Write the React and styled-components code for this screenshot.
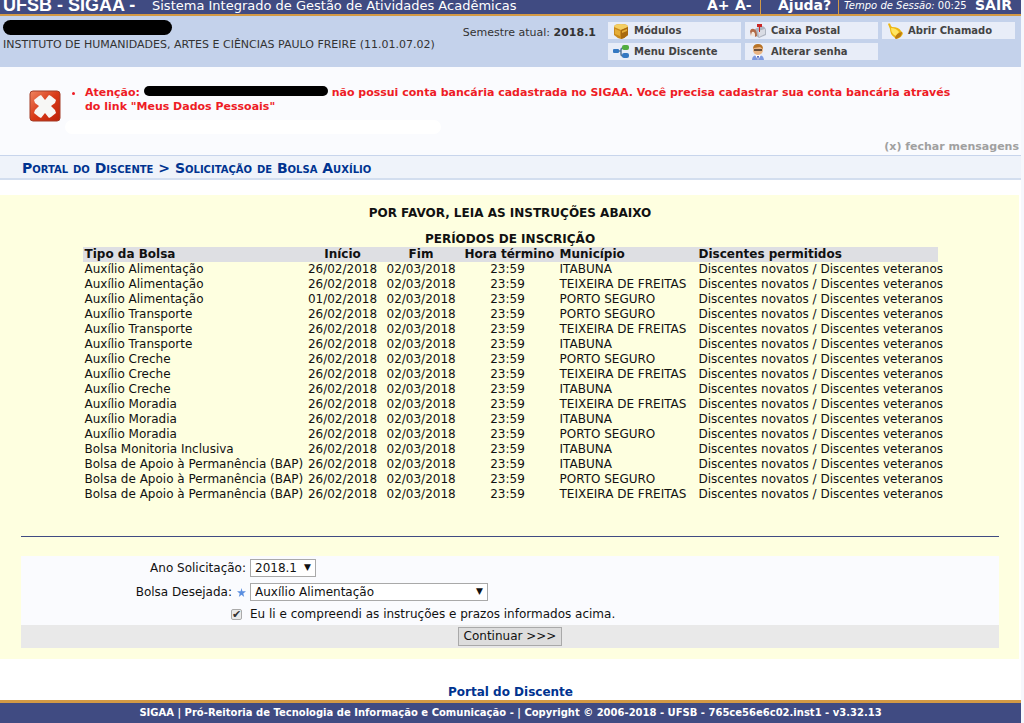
import React, { useState } from 'react';
import styled, { createGlobalStyle } from 'styled-components';

const GlobalStyle = createGlobalStyle`
  * {
    box-sizing: border-box;
  }

  body {
    margin: 0;
    background: #fff;
    color: #111;
    font-family: Verdana, 'DejaVu Sans', sans-serif;
    font-size: 12px;
    line-height: 15px;
  }
`;

const Page = styled.div`
  border-right: 3px solid #f6f7fc;
`;

const TopBar = styled.header`
  display: flex;
  align-items: flex-end;
  height: 16px;
  padding: 0 8px 0 3px;
  overflow: hidden;
  background: #404b82;
  border-bottom: 2px solid #d39a45;
  color: #fff;
  white-space: nowrap;
`;

const Brand = styled.span`
  width: 149px;
  font: bold 18px/18px 'Liberation Sans', Arial, sans-serif;
`;

const SystemName = styled.span`
  flex: 1;
  font-size: 13px;
  line-height: 16px;
`;

const TopTools = styled.div`
  display: flex;
  align-items: flex-end;
`;

const TopLink = styled.a`
  width: ${props => props.$width};
  color: #fff;
  font-size: 14px;
  font-weight: bold;
  line-height: 18px;
  text-decoration: none;
`;

const Session = styled.span`
  width: 137px;
  padding-left: 5px;
  border-left: 1px solid #d39a45;
  font-size: 10px;
  line-height: 16px;
`;

const Divider = styled.span`
  width: 18px;
  height: 14px;
  border-left: 1px solid #d39a45;
`;

const UserPanel = styled.section`
  display: flex;
  align-items: flex-start;
  height: 51px;
  padding: 4px 6px 0 3px;
  background: #c4d2eb;
  font-size: 11px;
  color: #333;
`;

const UserInfo = styled.div`
  flex: 1;
  white-space: nowrap;
`;

const Semester = styled.div`
  padding-top: 5px;
  margin-right: 12px;
  white-space: nowrap;
`;

const UserName = styled.span`
  display: block;
  width: 169px;
  height: 15px;
  border-radius: 8px;
  background: #000;
`;

const Unit = styled.div`
  padding-top: 2px;
`;

const Shortcuts = styled.nav`
  display: grid;
  grid-template-columns: repeat(3, 133px);
  grid-auto-rows: 17px;
  gap: 4px;
  margin-top: 2px;
`;

const Shortcut = styled.a`
  display: flex;
  align-items: center;
  gap: 5px;
  padding-left: 5px;
  background: #e8edf8;
  color: #444;
  font-size: 10px;
  font-weight: bold;
  text-decoration: none;
  white-space: nowrap;

  svg {
    width: 16px;
    height: 16px;
    flex: none;
  }
`;

const Messages = styled.section`
  display: flex;
  flex-direction: column;
  height: 88px;
  padding: 19px 2px 0 29px;
  background: #fafbfe;
`;

const MessageRow = styled.div`
  display: flex;
  flex: 1;

  > svg {
    flex: none;
    width: 32px;
    height: 32px;
    margin-top: 4px;
  }
`;

const MessageBody = styled.div`
  flex: 1;
`;

const ErrorList = styled.ul`
  margin: 0 0 6px;
  padding: 0 32px 0 24px;
  color: #ee1c25;
  font-size: 11px;
  font-weight: bold;
  line-height: 14px;
`;

const Redacted = styled.span`
  display: inline-block;
  width: 184px;
  height: 10px;
  border-radius: 5px;
  background: #000;
`;

const Smudge = styled.div`
  width: 376px;
  height: 14px;
  margin-left: 4px;
  border-radius: 7px;
  background: #fff;
`;

const CloseButton = styled.button`
  align-self: flex-end;
  padding: 0;
  margin-bottom: 1px;
  border: none;
  background: none;
  color: #a0a0a0;
  font-family: inherit;
  font-size: 11px;
  font-weight: bold;
  line-height: 15px;
`;

const Breadcrumb = styled.h2`
  margin: 0 0 15px;
  padding: 3px 22px 0;
  border-top: 1px solid #c8d5ec;
  border-bottom: 2px solid #d3deef;
  background: #eff3fa;
  color: #003390;
  font-size: 14px;
  font-variant: small-caps;
  line-height: 19px;

  a {
    color: inherit;
    text-decoration: none;
  }
`;

const Content = styled.main`
  padding: 11px 20px 11px 21px;
  margin-right: 2px;
  background: #feffe0;
`;

const Heading = styled.h3`
  margin: 0;
  font-size: 12px;
  line-height: 15px;
  text-align: center;
`;

const Periods = styled.table`
  width: 855px;
  max-width: 100%;
  margin: 11px auto 0;
  border-collapse: collapse;
  table-layout: fixed;
  line-height: 15px;
  white-space: nowrap;

  caption {
    font-weight: bold;
  }

  thead {
    background: #dedfe3;
  }
`;

const Cell = styled.td`
  width: ${props => props.$width};
  padding: 0 7px 0 2px;
  text-align: ${props => props.$align || 'left'};
`;

const Rule = styled.hr`
  height: 1px;
  margin: 34px 0 19px;
  border: none;
  background: #404b82;
`;

const Form = styled.form`
  background: #fafbfe;
`;

const Field = styled.div`
  display: grid;
  grid-template-columns: 225px 1fr;
  column-gap: 4px;
  align-items: center;
  height: ${props => props.$height || '24px'};

  > :first-child {
    justify-self: end;
  }
`;

const LabelCell = styled.div`
  display: flex;
  align-items: center;
  gap: 5px;

  svg {
    width: 9px;
    height: 9px;
  }
`;

const SelectBox = styled.span`
  position: relative;
  width: ${props => props.$width};

  &::after {
    content: '▼';
    position: absolute;
    top: 0;
    right: 5px;
    font-size: 9px;
    line-height: 17px;
    pointer-events: none;
  }
`;

const Select = styled.select`
  appearance: none;
  display: block;
  width: 100%;
  height: 18px;
  padding: 0 4px;
  border: 1px solid #a9a9a9;
  border-radius: 0;
  background: #fff;
  color: #111;
  font-family: inherit;
  font-size: 12px;
  line-height: 16px;
`;

const Checkbox = styled.input`
  appearance: none;
  display: grid;
  place-items: center;
  width: 11px;
  height: 11px;
  margin: 0 4px 0 0;
  border: 1px solid #aaa;
  border-radius: 2px;
  background: #eaeaea;

  &:checked::after {
    content: '✔';
    font-size: 11px;
    line-height: 9px;
    color: #333;
  }
`;

const Actions = styled.div`
  display: flex;
  justify-content: center;
  padding: 2px 0;
  background: #e9e9e9;
`;

const SubmitButton = styled.button`
  width: 104px;
  height: 19px;
  padding: 0;
  border: 1px solid #a9a9a9;
  background: #dddddd;
  color: #111;
  font-family: inherit;
  font-size: 12px;
  line-height: 15px;
`;

const BackLink = styled.div`
  padding: 26px 0 0;
  text-align: center;

  a {
    color: #003390;
    font-weight: bold;
    text-decoration: none;
  }
`;

const Footer = styled.footer`
  border-top: 3px solid #d39a45;
  background: #404b82;
  color: #fff;
  font-size: 10px;
  font-weight: bold;
  line-height: 20px;
  text-align: center;
`;

const ModulesIcon = () => (
  <svg viewBox="0 0 16 16">
    <path d="M1 4q0-3 7-3t7 3v8q-3 3-7 4-4-1-7-4z" fill="#c98a1c" />
    <path d="M1 4q0-3 7-3t7 3L8 7z" fill="#f4cf63" />
    <path d="M8 7l7-3v8q-3 3-7 4z" fill="#a8690e" />
    <path d="M2 6l5 2v5l-5-2zM9 8l5-2v2l-5 2z" fill="#e5ad37" />
  </svg>
);

const MenuIcon = () => (
  <svg viewBox="0 0 16 16">
    <path d="M5 7h3M12 4h-2Q8 4 8 6v4q0 2 2 2h2" fill="none" stroke="#56779b" strokeWidth="1.5" />
    <rect x="0" y="5" width="6" height="4" rx="1" fill="#3478c2" />
    <rect x="9" y="1" width="7" height="5" rx="2" fill="#52ad3f" />
    <rect x="9" y="9" width="7" height="5" rx="2" fill="#3478c2" />
  </svg>
);

const MailboxIcon = () => (
  <svg viewBox="0 0 16 16">
    <path d="M5 6l6-3q4 0 5 4v5l-7 3-4-3z" fill="#aeb4c0" />
    <path d="M0 8q1-3 4-2 3 1 3 7l-2 1q0-5-3-5l-1 4z" fill="#b26b48" />
    <path d="M2 9q3-1 3 4H1z" fill="#f3e8dc" />
    <path d="M8 8l7-2v5l-6 3z" fill="#d9dce4" />
    <path d="M7 1h5v3h-2v5H9V4H7z" fill="#cb2928" />
  </svg>
);

const PasswordIcon = () => (
  <svg viewBox="0 0 16 16">
    <path d="M2 16q0-5 6-5t6 5z" fill="#7e9ae0" />
    <path d="M5 11l3 5 3-5z" fill="#fff" />
    <circle cx="8" cy="6" r="5" fill="#eab584" />
    <path d="M3 5q0-5 5-5t5 5l-3-2-6 1z" fill="#b87327" />
    <path d="M4 5h8v2H4z" fill="#6b503b" />
    <path d="M7 12h2l-1 4z" fill="#4059b5" />
  </svg>
);

const BellIcon = () => (
  <svg viewBox="0 0 16 16">
    <path d="M1 1q2-2 3 2l1 1q7 0 9 4l2 2q-1 5-7 6l-2-2Q3 11 3 6z" fill="#edb712" />
    <path d="M4 5q5 0 8 4l-3 4Q4 11 4 5z" fill="#ffe561" />
    <path d="M8 15q1-5 7-6 0 5-6 7z" fill="#bd7b10" />
  </svg>
);

const ErrorIcon = () => (
  <svg viewBox="0 0 32 32">
    <defs>
      <linearGradient id="errorFill" x1="0" y1="0" x2="1" y2="1">
        <stop offset="0" stopColor="#ef8560" />
        <stop offset="0.5" stopColor="#d83a18" />
        <stop offset="1" stopColor="#bd2008" />
      </linearGradient>
    </defs>
    <rect x="1" y="1" width="30" height="30" rx="3" fill="url(#errorFill)" stroke="#a33c26" />
    <path
      d="M5 10l5-4 2-1 4 5 4-5 2 1 5 4-1 3-4 3 4 4 1 3-5 4-2 1-4-5-4 5-2-1-5-4 1-3 4-4-4-3z"
      fill="#f7f7f5"
    />
  </svg>
);

const StarIcon = () => (
  <svg viewBox="0 0 10 10">
    <path d="M5 0l1 3.5h4L7 6l1 4-3-2.4L2 10l1-4-3-2.5h4z" fill="#5b8fe0" />
  </svg>
);

const shortcuts = [
  { label: 'Módulos', icon: ModulesIcon },
  { label: 'Caixa Postal', icon: MailboxIcon },
  { label: 'Abrir Chamado', icon: BellIcon },
  { label: 'Menu Discente', icon: MenuIcon },
  { label: 'Alterar senha', icon: PasswordIcon }
];

const columns = [
  { title: 'Tipo da Bolsa', width: '223px' },
  { title: 'Início', width: '79px', align: 'center' },
  { title: 'Fim', width: '78px', align: 'center' },
  { title: 'Hora término', width: '95px', align: 'center' },
  { title: 'Município', width: '139px' },
  { title: 'Discentes permitidos' }
];

const periods = [
  ['Auxílio Alimentação', '26/02/2018', 'ITABUNA'],
  ['Auxílio Alimentação', '26/02/2018', 'TEIXEIRA DE FREITAS'],
  ['Auxílio Alimentação', '01/02/2018', 'PORTO SEGURO'],
  ['Auxílio Transporte', '26/02/2018', 'PORTO SEGURO'],
  ['Auxílio Transporte', '26/02/2018', 'TEIXEIRA DE FREITAS'],
  ['Auxílio Transporte', '26/02/2018', 'ITABUNA'],
  ['Auxílio Creche', '26/02/2018', 'PORTO SEGURO'],
  ['Auxílio Creche', '26/02/2018', 'TEIXEIRA DE FREITAS'],
  ['Auxílio Creche', '26/02/2018', 'ITABUNA'],
  ['Auxílio Moradia', '26/02/2018', 'TEIXEIRA DE FREITAS'],
  ['Auxílio Moradia', '26/02/2018', 'ITABUNA'],
  ['Auxílio Moradia', '26/02/2018', 'PORTO SEGURO'],
  ['Bolsa Monitoria Inclusiva', '26/02/2018', 'ITABUNA'],
  ['Bolsa de Apoio à Permanência (BAP)', '26/02/2018', 'ITABUNA'],
  ['Bolsa de Apoio à Permanência (BAP)', '26/02/2018', 'PORTO SEGURO'],
  ['Bolsa de Apoio à Permanência (BAP)', '26/02/2018', 'TEIXEIRA DE FREITAS']
].map(([grant, start, city]) => [
  grant, start, '02/03/2018', '23:59', city, 'Discentes novatos / Discentes veteranos'
]);

const App = () => {
  const [showMessages, setShowMessages] = useState(true);
  const [accepted, setAccepted] = useState(true);

  return (
    <>
      <GlobalStyle />
      <Page>
        <TopBar>
          <Brand>UFSB - SIGAA -</Brand>
          <SystemName>Sistema Integrado de Gestão de Atividades Acadêmicas</SystemName>
          <TopTools>
            <TopLink href="#" $width="28px">A+</TopLink>
            <TopLink href="#" $width="25px">A-</TopLink>
            <Divider />
            <TopLink href="#" $width="60px">Ajuda?</TopLink>
            <Session><i>Tempo de Sessão:</i> 00:25</Session>
            <TopLink href="#" $width="38px">SAIR</TopLink>
          </TopTools>
        </TopBar>

        <UserPanel>
          <UserInfo>
            <UserName />
            <Unit>INSTITUTO DE HUMANIDADES, ARTES E CIÊNCIAS PAULO FREIRE (11.01.07.02)</Unit>
          </UserInfo>
          <Semester>Semestre atual: <b>2018.1</b></Semester>
          <Shortcuts>
            {shortcuts.map(({ label, icon: Icon }) => (
              <Shortcut key={label} href="#"><Icon />{label}</Shortcut>
            ))}
          </Shortcuts>
        </UserPanel>

        {showMessages && (
          <Messages>
            <MessageRow>
              <ErrorIcon />
              <MessageBody>
                <ErrorList>
                  <li>
                    Atenção: <Redacted /> não possui conta bancária cadastrada no SIGAA. Você precisa
                    cadastrar sua conta bancária através<br />
                    do link "Meus Dados Pessoais"
                  </li>
                </ErrorList>
                <Smudge />
              </MessageBody>
            </MessageRow>
            <CloseButton type="button" onClick={() => setShowMessages(false)}>
              (x) fechar mensagens
            </CloseButton>
          </Messages>
        )}

        <Breadcrumb>
          <a href="#">Portal do Discente</a> &gt; Solicitação de Bolsa Auxílio
        </Breadcrumb>

        <Content>
          <Heading>POR FAVOR, LEIA AS INSTRUÇÕES ABAIXO</Heading>
          <Periods>
            <caption>PERÍODOS DE INSCRIÇÃO</caption>
            <thead>
              <tr>
                {columns.map(column => (
                  <Cell as="th" key={column.title} $width={column.width} $align={column.align}>
                    {column.title}
                  </Cell>
                ))}
              </tr>
            </thead>
            <tbody>
              {periods.map((row, index) => (
                <tr key={index}>
                  {row.map((value, i) => (
                    <Cell key={i} $align={columns[i].align}>{value}</Cell>
                  ))}
                </tr>
              ))}
            </tbody>
          </Periods>

          <Rule />

          <Form onSubmit={(e) => e.preventDefault()}>
            <Field>
              <label htmlFor="year">Ano Solicitação:</label>
              <SelectBox $width="66px">
                <Select id="year"><option>2018.1</option></Select>
              </SelectBox>
            </Field>
            <Field>
              <LabelCell><label htmlFor="grant">Bolsa Desejada:</label><StarIcon /></LabelCell>
              <SelectBox $width="238px">
                <Select id="grant"><option>Auxílio Alimentação</option></Select>
              </SelectBox>
            </Field>
            <Field $height="21px">
              <Checkbox
                id="accepted"
                type="checkbox"
                checked={accepted}
                onChange={(e) => setAccepted(e.target.checked)}
              />
              <label htmlFor="accepted">Eu li e compreendi as instruções e prazos informados acima.</label>
            </Field>
            <Actions>
              <SubmitButton type="submit">Continuar &gt;&gt;&gt;</SubmitButton>
            </Actions>
          </Form>
        </Content>

        <BackLink><a href="#">Portal do Discente</a></BackLink>
        <Footer>
          SIGAA | Pró-Reitoria de Tecnologia de Informação e Comunicação - | Copyright © 2006-2018 - UFSB - 765ce56e6c02.inst1 - v3.32.13
        </Footer>
      </Page>
    </>
  );
};

export default App;
